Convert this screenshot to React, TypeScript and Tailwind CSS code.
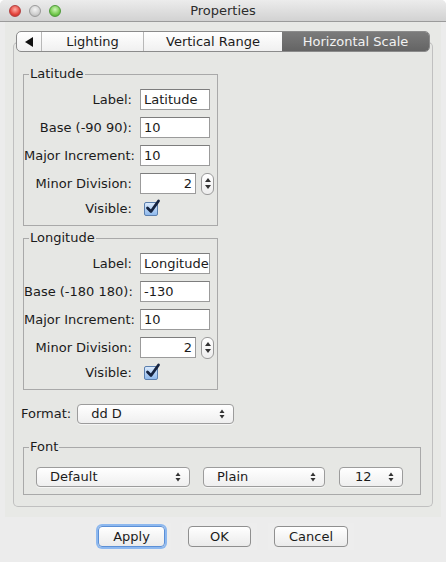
import React from 'react';

const Arrows: React.FC = () => (
    <svg width="6" height="10" viewBox="0 0 6 10" className="shrink-0">
        <path d="M3 0.5L5.5 4H0.5z" fill="#333" />
        <path d="M3 9.5L5.5 6H0.5z" fill="#333" />
    </svg>
);

const Combo: React.FC<{ value: string; w: string; pl?: string }> = ({ value, w, pl = 'pl-[13px]' }) => (
    <div className={`${w} ${pl} h-[20px] pr-[8px] flex items-center justify-between rounded-[4px] border border-[#9c9c9c] bg-gradient-to-b from-white to-[#efefef] shadow-[0_1px_0_rgba(255,255,255,0.6)]`}>
        <span>{value}</span>
        <Arrows />
    </div>
);

const Field: React.FC<{ value: string; w?: string; right?: boolean }> = ({ value, w = 'w-[70px]', right }) => (
    <div className={`${w} h-[21px] flex items-center px-[3px] bg-white border border-[#9b9b9b] border-t-[#7d7d7d] whitespace-nowrap overflow-hidden ${right ? 'justify-end' : ''}`}>
        {value}
    </div>
);

const Spinner: React.FC = () => (
    <div className="w-[13px] h-[22px] ml-[5px] flex flex-col items-center justify-center gap-[3px] rounded-[6px] border border-[#9a9a9a] bg-gradient-to-b from-white to-[#ededed]">
        <svg width="6" height="4" viewBox="0 0 6 4"><path d="M3 0L6 4H0z" fill="#333" /></svg>
        <svg width="6" height="4" viewBox="0 0 6 4"><path d="M3 4L6 0H0z" fill="#333" /></svg>
    </div>
);

const Check: React.FC = () => (
    <div className="relative w-[14px] h-[14px] rounded-[2px] border border-[#5b7fae] bg-gradient-to-b from-[#dbeafc] to-[#8fb9ec]">
        <svg width="16" height="16" viewBox="0 0 16 16" className="absolute -top-[4px] left-[0px]">
            <path d="M2.5 9L6 12.5L13.5 2" stroke="#15233f" strokeWidth="2.8" fill="none" strokeLinecap="round" strokeLinejoin="round" />
        </svg>
    </div>
);

const Row: React.FC<{ label: string; children: React.ReactNode }> = ({ label, children }) => (
    <div className="flex items-center h-[21px]">
        <div className="w-[109px] text-right pr-[1px] whitespace-nowrap">{label}</div>
        <div className="ml-[7px] flex items-center">{children}</div>
    </div>
);

const Group: React.FC<{ title: string; label: string; baseLabel: string; base: string; className?: string }> = ({ title, label, baseLabel, base, className = '' }) => (
    <fieldset className={`w-[195px] ml-[9px] border border-[#a9a9a9] pt-[7px] pb-[8px] ${className}`}>
        <legend className="ml-[5px] px-[1px] leading-[16px]">{title}</legend>
        <div className="flex flex-col gap-[7px]">
            <Row label="Label:"><Field value={label} /></Row>
            <Row label={baseLabel}><Field value={base} /></Row>
            <Row label="Major Increment:"><Field value="10" /></Row>
            <Row label="Minor Division:"><Field value="2" w="w-[56px]" right /><Spinner /></Row>
            <div className="flex items-center h-[16px]">
                <div className="w-[109px] text-right pr-[1px]">Visible:</div>
                <div className="ml-[11px]"><Check /></div>
            </div>
        </div>
    </fieldset>
);

const Button: React.FC<{ label: string; w: string; focus?: boolean }> = ({ label, w, focus }) => (
    <div className="px-[6px] py-[3px] bg-[#efefef]/60">
        <div className={`${w} h-[21px] flex items-center justify-center rounded-[4px] border bg-gradient-to-b from-white to-[#ebebeb] ${focus ? 'border-[#5b8fd6] shadow-[0_0_0_2px_#8db8ef]' : 'border-[#8f8f8f]'}`}>
            {label}
        </div>
    </div>
);

export default function App() {
    return (
        <div className="w-[446px] h-[562px] bg-[#ececec] overflow-hidden rounded-t-[5px] font-['DejaVu_Sans',sans-serif] text-[13px] text-[#1b1b1b]">
            {/* Title bar */}
            <div className="relative h-[22px] flex items-center justify-center bg-gradient-to-b from-[#ececec] to-[#d2d2d2] border-b border-[#9b9b9b]">
                <div className="absolute left-[9px] top-[5px] flex gap-[8px]">
                    <span className="w-[12px] h-[12px] rounded-full border border-[#b34040] bg-[radial-gradient(circle_at_50%_35%,#ffb0a8,#e4443c_60%,#b82a24)]" />
                    <span className="w-[12px] h-[12px] rounded-full border border-[#9a9a9a] bg-[radial-gradient(circle_at_50%_35%,#f4f4f4,#cfcfcf_60%,#aaaaaa)]" />
                    <span className="w-[12px] h-[12px] rounded-full border border-[#4f9a3a] bg-[radial-gradient(circle_at_50%_35%,#cff6b8,#74c94d_60%,#3f9a2a)]" />
                </div>
                <span className="text-[13px] text-[#2c2c2c]">Properties</span>
            </div>

            {/* Main panel */}
            <div className="mx-[5px] h-[495px] bg-[#e8e9e6] pt-[9px] px-[8px]">
                {/* Segmented tabs */}
                <div className="relative z-10 mx-[3px] h-[21px] flex rounded-[5px] border border-[#8b8b8b] bg-gradient-to-b from-white to-[#f0f0f0] overflow-hidden">
                    <div className="w-[25px] flex items-center justify-center border-r border-[#b8b8b8]">
                        <svg width="8" height="10" viewBox="0 0 8 10"><path d="M0 5L8 0V10z" fill="#111" /></svg>
                    </div>
                    <div className="w-[102px] flex items-center justify-center border-r border-[#b8b8b8]">Lighting</div>
                    <div className="w-[138px] flex items-center justify-center">Vertical Range</div>
                    <div className="flex-1 flex items-center justify-center bg-gradient-to-b from-[#7b7b7b] to-[#646464] text-[#f2f2f2]">Horizontal Scale</div>
                </div>

                {/* Tab pane */}
                <div className="-mt-[10px] h-[465px] rounded-[5px] border border-[#c0c0c0] border-t-[#b0b0b0] bg-[#e6e7e4] pt-[23px]">
                    <Group title="Latitude" label="Latitude" baseLabel="Base (-90 90):" base="10" />
                    <Group title="Longitude" label="Longitude" baseLabel="Base (-180 180):" base="-130" className="mt-[4px]" />

                    <div className="flex items-center mt-[14px] ml-[7px]">
                        <span>Format:</span>
                        <div className="ml-[6px]"><Combo value="dd D" w="w-[157px]" /></div>
                    </div>

                    <fieldset className="w-[398px] ml-[9px] mt-[15px] border border-[#a9a9a9] pt-[12px] pb-[7px] px-[12px]">
                        <legend className="ml-[-7px] px-[1px] leading-[16px]">Font</legend>
                        <div className="flex items-center">
                            <Combo value="Default" w="w-[154px]" />
                            <div className="ml-[13px]"><Combo value="Plain" w="w-[122px]" /></div>
                            <div className="ml-[14px]"><Combo value="12" w="w-[64px]" pl="pl-[15px]" /></div>
                        </div>
                    </fieldset>
                </div>
            </div>

            {/* Buttons */}
            <div className="flex justify-center pt-[6px]">
                <Button label="Apply" w="w-[67px]" focus />
                <div className="ml-[11px]"><Button label="OK" w="w-[63px]" /></div>
                <div className="ml-[11px]"><Button label="Cancel" w="w-[74px]" /></div>
            </div>
        </div>
    );
}
